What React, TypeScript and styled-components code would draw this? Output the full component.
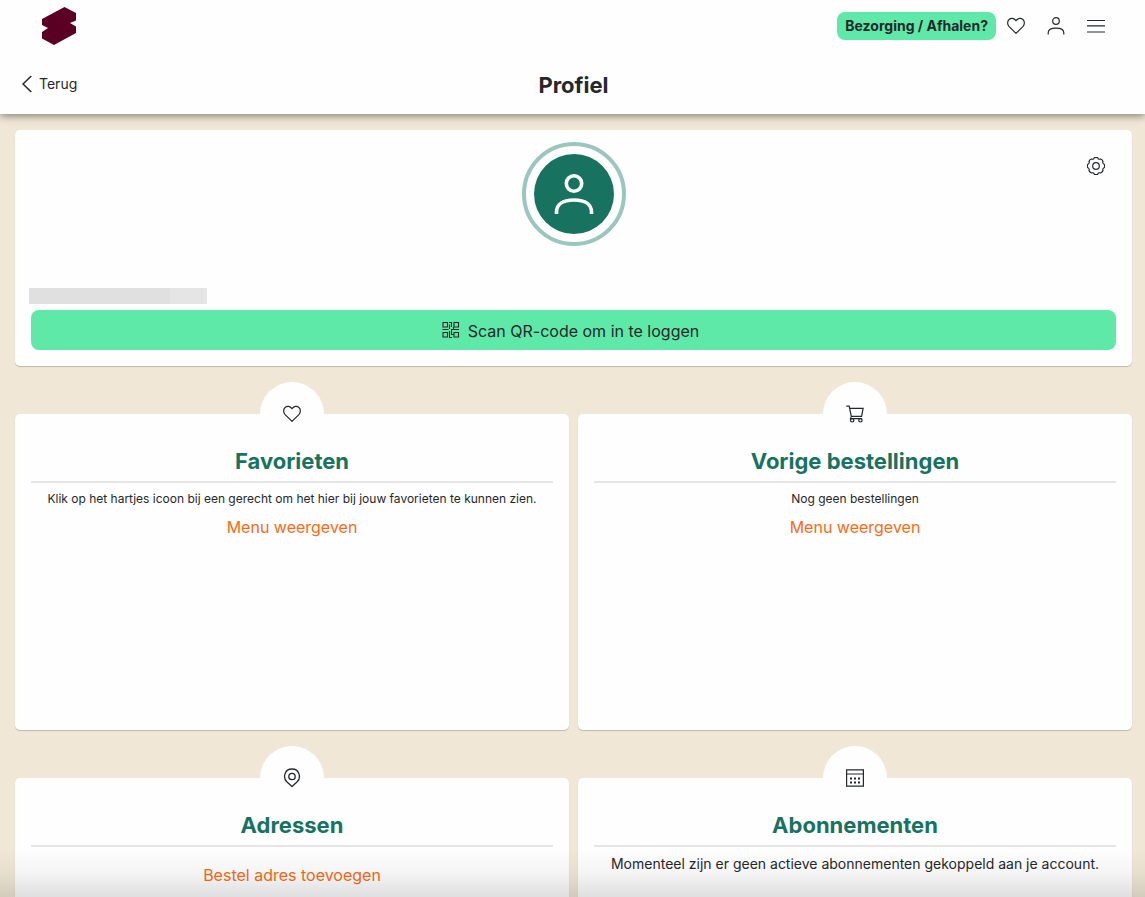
import React from "react";
import styled, { createGlobalStyle } from "styled-components";

const ink = "#25282a";
const green = "#187260";
const mint = "#5fe9a9";
const orange = "#f96b15";
const sand = "#f0e7d6";

const GlobalStyle = createGlobalStyle`
  * { box-sizing: border-box; }
  body {
    margin: 0;
    background: ${sand};
    color: ${ink};
    font-family: Inter, "Liberation Sans", sans-serif;
    font-size: 16px;
  }
  h1, h2, p { margin: 0; }
  svg { display: block; }
`;

const Shell = styled.div`
  height: 100vh;
  display: flex;
  flex-direction: column;
  position: relative;
  overflow: hidden;
`;

const Header = styled.header`
  flex: none;
  background: #fefefe;
  box-shadow: 0 2px 8px rgba(0, 0, 0, 0.45);
  z-index: 2;
`;

const TopBar = styled.div`
  height: 52px;
  display: flex;
  align-items: center;
  justify-content: space-between;
  padding: 0 40px 0 42px;
`;

const LogoLink = styled.a`
  display: block;
`;

const Actions = styled.nav`
  display: flex;
  align-items: center;
  gap: 11px;
`;

const OrderButton = styled.button`
  height: 28px;
  padding: 0 8px;
  border: 0;
  border-radius: 8px;
  background: ${mint};
  color: ${ink};
  font: 700 14px/28px Inter, sans-serif;
`;

const IconGroup = styled.div`
  display: flex;
  gap: 22px;
`;

const IconButton = styled.button`
  padding: 0;
  border: 0;
  background: none;
  color: ${ink};
`;

const TitleBar = styled.div`
  height: 62px;
  display: grid;
  grid-template-columns: 1fr auto 1fr;
  align-items: center;
  padding: 2px 20px 0 22px;
`;

const BackLink = styled.a`
  display: flex;
  align-items: center;
  gap: 7px;
  color: ${ink};
  font-size: 14px;
  line-height: 16px;
  font-weight: 400;
  text-decoration: none;
`;

const PageTitle = styled.h1`
  padding-top: 2px;
  font-size: 22px;
  line-height: 28px;
  font-weight: 700;
`;

const Main = styled.main`
  flex: 1;
  min-height: 0;
  overflow-y: auto;
  scrollbar-width: none;
  padding: 16px 13px 16px 15px;
`;

const Card = styled.section`
  background: #fefefe;
  border-radius: 5px;
  box-shadow: 0 1px 1px rgba(0, 0, 0, 0.2);
`;

const ProfileCard = styled(Card)`
  position: relative;
  display: flex;
  flex-direction: column;
  padding: 12px 16px 16px;
`;

const Settings = styled(IconButton)`
  position: absolute;
  top: 27px;
  right: 27px;
`;

const Avatar = styled.div`
  align-self: center;
  width: 104px;
  height: 104px;
  padding: 8px;
  border: 4px solid #99c7bf;
  border-radius: 50%;
`;

const AvatarFill = styled.div`
  height: 100%;
  display: grid;
  place-items: center;
  border-radius: 50%;
  background: ${green};
  color: #fefefe;
`;

const HiddenName = styled.div`
  width: 178px;
  height: 16px;
  margin: 42px 0 6px -2px;
  background: linear-gradient(90deg, #e0e0e0 141px, #e5e5e5 141px);
`;

const ScanButton = styled.button`
  height: 40px;
  display: flex;
  align-items: center;
  justify-content: center;
  gap: 8px;
  padding: 0 12px 0 6px;
  border: 0;
  border-radius: 8px;
  background: ${mint};
  color: ${ink};
  font: 400 16px/20px Inter, sans-serif;
`;

const ScanLabel = styled.span`
  padding-top: 2px;
`;

const CardGrid = styled.div`
  display: grid;
  grid-template-columns: 1fr 1fr;
  gap: 48px 9px;
  padding-top: 48px;
`;

const InfoCard = styled(Card)`
  position: relative;
  min-height: 316px;
  display: flex;
  flex-direction: column;
  align-items: center;
  padding: 32px 16px 16px;
  text-align: center;
`;

const Badge = styled.div`
  position: absolute;
  top: -32px;
  left: 50%;
  width: 64px;
  height: 64px;
  margin-left: -32px;
  display: grid;
  place-items: center;
  border-radius: 50%;
  background: #fefefe;
`;

const CardTitle = styled.h2`
  align-self: stretch;
  padding-bottom: 5px;
  border-bottom: 2px solid #e5e5e5;
  color: ${green};
  font-size: 22px;
  line-height: 30px;
  font-weight: 700;
`;

const Note = styled.p<{ $large?: boolean }>`
  margin-top: 8px;
  font-size: ${(p) => (p.$large ? 14 : 12)}px;
  line-height: ${(p) => (p.$large ? 18 : 16)}px;
  font-weight: 400;
`;

const CardLink = styled.a<{ $alone?: boolean }>`
  margin-top: ${(p) => (p.$alone ? 18 : 10)}px;
  color: ${orange};
  font-size: 16px;
  line-height: 20px;
  font-weight: 400;
  text-decoration: none;
`;

const BottomFade = styled.div`
  position: absolute;
  left: 0;
  right: 0;
  bottom: 0;
  height: 48px;
  z-index: 3;
  background: linear-gradient(rgba(0, 0, 0, 0), rgba(0, 0, 0, 0.04) 50%, rgba(0, 0, 0, 0.12));
  pointer-events: none;
`;

type IconProps = { size?: number; weight?: number; children: React.ReactNode };

const Icon = ({ size = 18, weight = 1.2, children }: IconProps) => (
  <svg width={size} height={size} viewBox="0 0 18 18" fill="none" stroke="currentColor" strokeWidth={weight} aria-hidden="true">
    {children}
  </svg>
);

const Heart = () => (
  <Icon>
    <path d="M9 16.4 1.9 9.3C.1 7.3.3 4 2.1 2.5 4.2.7 7 1.1 9 3.7c2-2.6 4.8-3 6.9-1.2 1.8 1.5 2 4.8.2 6.8Z" strokeLinejoin="round" />
  </Icon>
);

const User = () => (
  <Icon>
    <circle cx="9" cy="4" r="3.3" />
    <path d="M1.2 17.4v-1.6c0-3 2.4-4.6 7.8-4.6s7.8 1.6 7.8 4.6v1.6" />
  </Icon>
);

const Menu = () => (
  <Icon>
    <path d="M0 3.5h18M0 8.800h18M0 15h18" />
  </Icon>
);

const Gear = () => (
  <Icon weight={1.2}>
    <path
      d="M17.22 7.25A4 4 0 0 1 17.22 10.75A1.9 1.9 0 0 0 16.04 13.57A4 4 0 0 1 13.57 16.04A1.9 1.9 0 0 0 10.75 17.22A4 4 0 0 1 7.25 17.22A1.9 1.9 0 0 0 4.43 16.04A4 4 0 0 1 1.96 13.57A1.9 1.9 0 0 0 .78 10.75A4 4 0 0 1 .78 7.25A1.9 1.9 0 0 0 1.96 4.43A4 4 0 0 1 4.43 1.96A1.9 1.9 0 0 0 7.25 .78A4 4 0 0 1 10.75 .78A1.9 1.9 0 0 0 13.57 1.96A4 4 0 0 1 16.04 4.43A1.9 1.9 0 0 0 17.22 7.25Z"
      strokeLinejoin="round"
    />
    <circle cx="9" cy="9" r="3.3" />
  </Icon>
);

const Qr = () => (
  <Icon weight={1.1}>
    <path d="M1 1.5h4.5V6H1zM12 1.5h4.5V6H12zM1 11.5h4.5V16H1zM12 11.5h4.5V16H12z" />
    <path d="M7 1.5h2.5V6M7.5 3.5V8M.5 8.5h6M9 8.5h8M7.5 10v6.5h2.5M9.5 9v4.5H12M11.5 6V8" />
  </Icon>
);

const Cart = () => (
  <Icon>
    <path d="M.3 1.2h2.9l2.1 10.2h10.3l1.5-8H3.7M5.3 11.4l-.8 2.2h11.3" />
    <circle cx="6.2" cy="15.3" r="1.7" />
    <circle cx="14.4" cy="15.3" r="1.7" />
  </Icon>
);

const Pin = () => (
  <svg width="18" height="20" viewBox="0 0 18 20" fill="none" stroke="currentColor" strokeWidth="1.3" aria-hidden="true">
    <path d="M9 18.6 3.800 13.800C-.2 9.800 1.300 1 9 1s9.200 8.800 5.200 12.800Z" strokeLinejoin="round" />
    <circle cx="9" cy="8.500" r="3.200" />
  </svg>
);

const Calendar = () => (
  <Icon>
    <path d="M.6.9h16.8v16.2H.6zM.6 5h16.8" />
    <path d="M4 9.5h2M8 9.5h2M12 9.5h2M4 13.500h2M8 13.500h2M12 13.500h2" strokeWidth="1.800" />
  </Icon>
);

const Logo = () => (
  <svg width="34" height="38" viewBox="0 0 34 38" aria-hidden="true">
    <path d="M22.5 0 34 6v7.5L28 16l6 3.500V26L12 38 0 31.5V25l6-4-6-3v-6Z" fill="#5b0023" />
  </svg>
);

export default function App() {
  return (
    <>
      <GlobalStyle />
      <Shell>
        <Header>
          <TopBar>
            <LogoLink href="#" aria-label="Home"><Logo /></LogoLink>
            <Actions>
              <OrderButton type="button">Bezorging / Afhalen?</OrderButton>
              <IconGroup>
                <IconButton type="button" aria-label="Favorieten"><Heart /></IconButton>
                <IconButton type="button" aria-label="Profiel"><User /></IconButton>
                <IconButton type="button" aria-label="Menu"><Menu /></IconButton>
              </IconGroup>
            </Actions>
          </TopBar>
          <TitleBar>
            <BackLink href="#">
              <svg width="10" height="18" viewBox="0 0 10 18" fill="none" stroke="currentColor" strokeWidth="1.5" aria-hidden="true">
                <path d="M9.3 1 1 9l8.3 8" />
              </svg>
              Terug
            </BackLink>
            <PageTitle>Profiel</PageTitle>
          </TitleBar>
        </Header>
        <Main>
          <ProfileCard>
            <Avatar>
              <AvatarFill>
                <svg width="40" height="42" viewBox="0 0 40 42" fill="none" stroke="currentColor" strokeWidth="3.6" aria-hidden="true">
                  <circle cx="20" cy="10.5" r="7.7" />
                  <path d="M2.500 41v-2c0-7 5.500-12 17.500-12s17.500 5 17.500 12v2" />
                </svg>
              </AvatarFill>
            </Avatar>
            <Settings type="button" aria-label="Instellingen"><Gear /></Settings>
            <HiddenName />
            <ScanButton type="button"><Qr /><ScanLabel>Scan QR-code om in te loggen</ScanLabel></ScanButton>
          </ProfileCard>
          <CardGrid>
            <InfoCard>
              <Badge><Heart /></Badge>
              <CardTitle>Favorieten</CardTitle>
              <Note>Klik op het hartjes icoon bij een gerecht om het hier bij jouw favorieten te kunnen zien.</Note>
              <CardLink href="#">Menu weergeven</CardLink>
            </InfoCard>
            <InfoCard>
              <Badge><Cart /></Badge>
              <CardTitle>Vorige bestellingen</CardTitle>
              <Note>Nog geen bestellingen</Note>
              <CardLink href="#">Menu weergeven</CardLink>
            </InfoCard>
            <InfoCard>
              <Badge><Pin /></Badge>
              <CardTitle>Adressen</CardTitle>
              <CardLink href="#" $alone>Bestel adres toevoegen</CardLink>
            </InfoCard>
            <InfoCard>
              <Badge><Calendar /></Badge>
              <CardTitle>Abonnementen</CardTitle>
              <Note $large>Momenteel zijn er geen actieve abonnementen gekoppeld aan je account.</Note>
            </InfoCard>
          </CardGrid>
        </Main>
        <BottomFade />
      </Shell>
    </>
  );
}
